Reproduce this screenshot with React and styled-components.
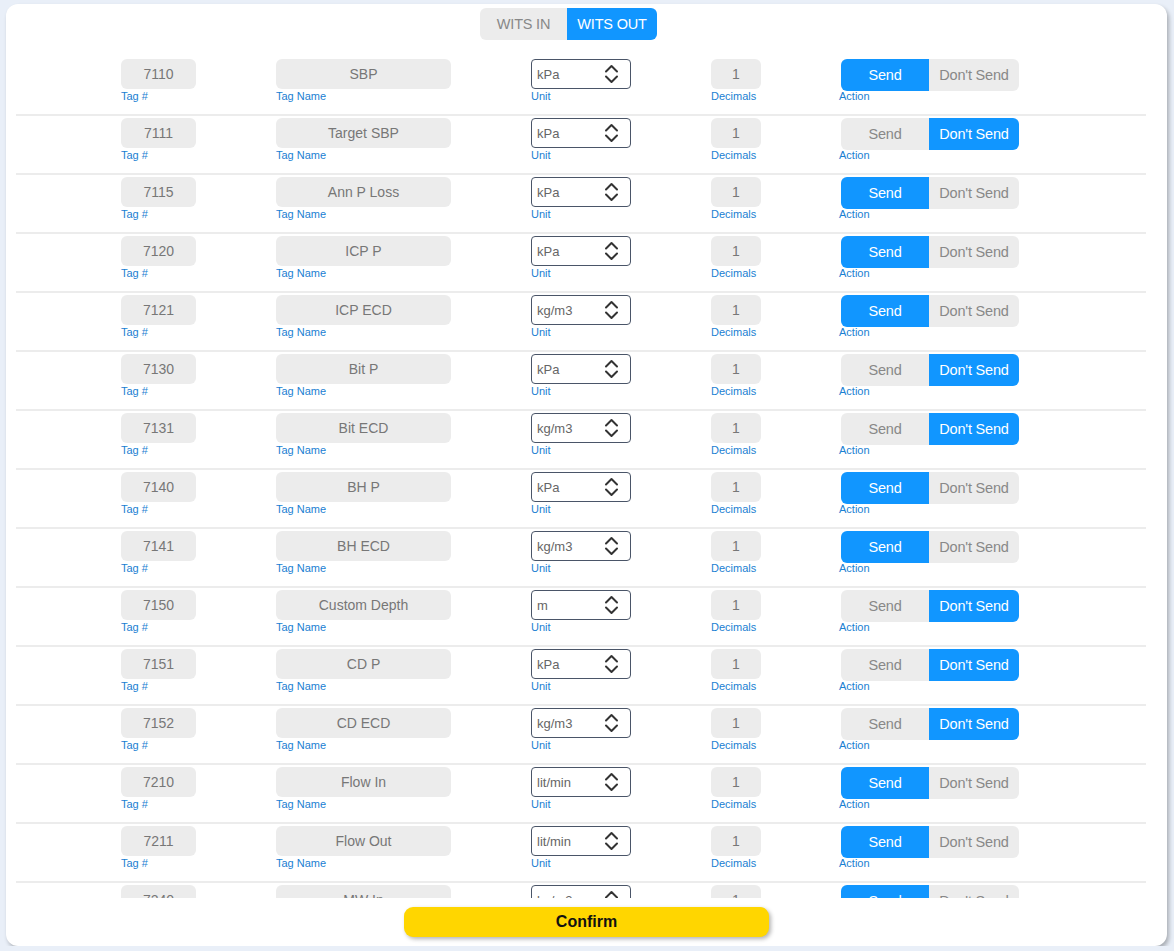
import React, { useState } from 'react';
import styled, { createGlobalStyle } from 'styled-components';

const rowsData = [
  { tag: '7110', name: 'SBP', unit: 'kPa', send: true },
  { tag: '7111', name: 'Target SBP', unit: 'kPa', send: false },
  { tag: '7115', name: 'Ann P Loss', unit: 'kPa', send: true },
  { tag: '7120', name: 'ICP P', unit: 'kPa', send: true },
  { tag: '7121', name: 'ICP ECD', unit: 'kg/m3', send: true },
  { tag: '7130', name: 'Bit P', unit: 'kPa', send: false },
  { tag: '7131', name: 'Bit ECD', unit: 'kg/m3', send: false },
  { tag: '7140', name: 'BH P', unit: 'kPa', send: true },
  { tag: '7141', name: 'BH ECD', unit: 'kg/m3', send: true },
  { tag: '7150', name: 'Custom Depth', unit: 'm', send: false },
  { tag: '7151', name: 'CD P', unit: 'kPa', send: false },
  { tag: '7152', name: 'CD ECD', unit: 'kg/m3', send: false },
  { tag: '7210', name: 'Flow In', unit: 'lit/min', send: true },
  { tag: '7211', name: 'Flow Out', unit: 'lit/min', send: true },
  { tag: '7240', name: 'MW In', unit: 'kg/m3', send: true },
  { tag: '7241', name: 'MW Out', unit: 'kg/m3', send: true },
];

function Chevrons() {
  return (
    <svg width="15" height="20" viewBox="0 0 15 20" fill="none" stroke="#333" strokeWidth="2" strokeLinecap="round" strokeLinejoin="round">
      <path d="M2 7.5 L7.5 2 L13 7.5" />
      <path d="M2 12.5 L7.5 18 L13 12.5" />
    </svg>
  );
}

function App() {
  const [tab, setTab] = useState('out');
  const [rows, setRows] = useState(rowsData);

  const toggle = (i, val) =>
    setRows((r) => r.map((row, j) => (j === i ? { ...row, send: val } : row)));

  return (
    <>
      <GlobalStyle />
      <Card>
        <TabBar>
          <Tab $w={87} $active={tab === 'in'} onClick={() => setTab('in')}>WITS IN</Tab>
          <Tab $w={90} $active={tab === 'out'} onClick={() => setTab('out')}>WITS OUT</Tab>
        </TabBar>
        <List>
          {rows.map((row, i) => (
            <Row key={row.tag}>
              <Field>
                <Box $w={75}>{row.tag}</Box>
                <Label>Tag #</Label>
              </Field>
              <Field>
                <Box $w={175}>{row.name}</Box>
                <Label>Tag Name</Label>
              </Field>
              <Field>
                <Select>
                  <span>{row.unit}</span>
                  <Chevrons />
                </Select>
                <Label>Unit</Label>
              </Field>
              <Field>
                <Box $w={50}>1</Box>
                <Label>Decimals</Label>
              </Field>
              <Field>
                <Toggle>
                  <ToggleBtn $w={88} $active={row.send} onClick={() => toggle(i, true)}>Send</ToggleBtn>
                  <ToggleBtn $w={90} $active={!row.send} onClick={() => toggle(i, false)}>Don't Send</ToggleBtn>
                </Toggle>
                <ActionLabel>Action</ActionLabel>
              </Field>
            </Row>
          ))}
        </List>
        <Footer>
          <Confirm>Confirm</Confirm>
        </Footer>
      </Card>
    </>
  );
}

export default App;

const GlobalStyle = createGlobalStyle`
  body {
    margin: 0;
    background: #e9eff8;
    font-family: "Liberation Sans", Arial, sans-serif;
  }
`;

const Card = styled.div`
  margin: 4px 0 0 6px;
  width: 1161px;
  height: 942px;
  background: #fff;
  border-radius: 12px;
  box-shadow: 2px 3px 4px rgba(0, 0, 0, 0.28);
  display: flex;
  flex-direction: column;
  overflow: hidden;
`;

const TabBar = styled.div`
  display: flex;
  padding: 4px 0 0 474px;
`;

const Tab = styled.div`
  width: ${(p) => p.$w}px;
  height: 32px;
  display: flex;
  align-items: center;
  justify-content: center;
  font-size: 14.5px;
  letter-spacing: -0.2px;
  color: ${(p) => (p.$active ? '#fff' : '#888')};
  background: ${(p) => (p.$active ? '#1196ff' : '#ececec')};
  cursor: pointer;
  &:first-child {
    border-radius: 6px 0 0 6px;
  }
  &:last-child {
    border-radius: 0 6px 6px 0;
  }
`;

const List = styled.div`
  margin: 17px 21px 0 10px;
  flex: 1;
  overflow-y: auto;
  scrollbar-width: none;
  &::-webkit-scrollbar {
    display: none;
  }
`;

const Row = styled.div`
  display: flex;
  gap: 80px;
  padding: 2px 0 12px 105px;
  border-bottom: 2px solid #ececec;
`;

const Field = styled.div`
  display: flex;
  flex-direction: column;
`;

const Box = styled.div`
  width: ${(p) => p.$w}px;
  height: 30px;
  background: #ececec;
  border-radius: 6px;
  display: flex;
  align-items: center;
  justify-content: center;
  font-size: 14px;
  color: #777;
`;

const Select = styled.div`
  box-sizing: border-box;
  width: 100px;
  height: 30px;
  border: 1px solid #4a5568;
  border-radius: 4px;
  display: flex;
  align-items: center;
  justify-content: space-between;
  padding: 0 11px 0 5px;
  font-size: 13px;
  color: #666;
`;

const Label = styled.div`
  font-size: 11px;
  line-height: 13px;
  margin-top: 1px;
  margin-bottom: -1px;
  color: #1a80d2;
`;

const ActionLabel = styled(Label)`
  margin-left: -2px;
`;

const Toggle = styled.div`
  display: flex;
`;

const ToggleBtn = styled.div`
  width: ${(p) => p.$w}px;
  height: 32px;
  margin-bottom: -2px;
  display: flex;
  align-items: center;
  justify-content: center;
  font-size: 14.5px;
  letter-spacing: -0.2px;
  color: ${(p) => (p.$active ? '#fff' : '#888')};
  background: ${(p) => (p.$active ? '#1196ff' : '#ececec')};
  cursor: pointer;
  &:first-child {
    border-radius: 6px 0 0 6px;
  }
  &:last-child {
    border-radius: 0 6px 6px 0;
  }
`;

const Footer = styled.div`
  display: flex;
  justify-content: center;
  padding: 9px 0;
`;

const Confirm = styled.button`
  width: 365px;
  height: 30px;
  border: none;
  border-radius: 9px;
  background: #ffd600;
  box-shadow: 2px 2px 4px rgba(0, 0, 0, 0.3);
  font-family: "Liberation Sans", Arial, sans-serif;
  font-weight: bold;
  font-size: 16px;
  color: #111;
  cursor: pointer;
`;
